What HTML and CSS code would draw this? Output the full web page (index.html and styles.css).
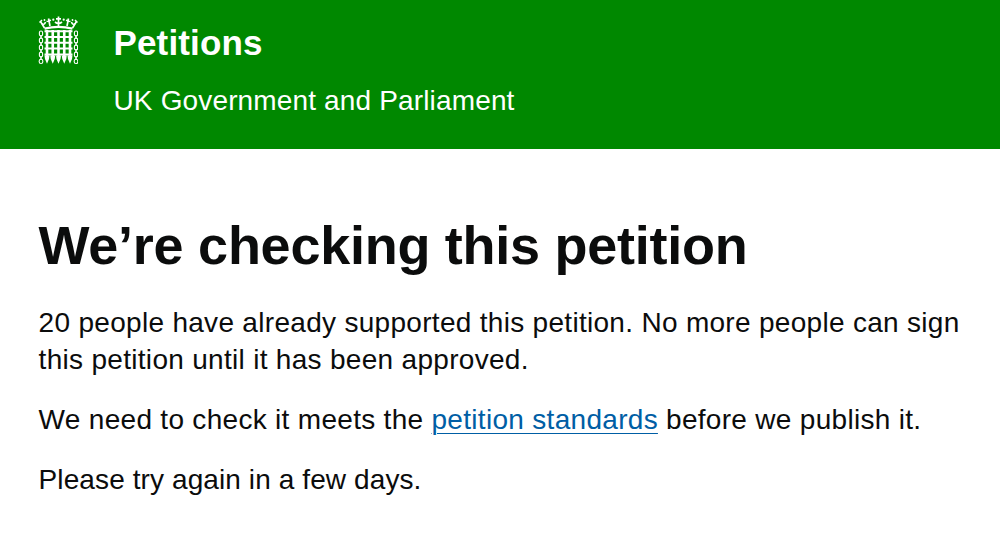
FILE: index.html
```html
<!DOCTYPE html>
<html lang="en">
<head>
<meta charset="utf-8">
<title>We’re checking this petition - Petitions</title>
<link rel="stylesheet" href="styles.css">
</head>
<body>
<header class="header">
  <svg class="portcullis" viewBox="38 15 40 50" aria-hidden="true">
    <g fill="none" stroke="#fff" stroke-width="2">
      <path d="M44.500 31.200H72.500M44.500 37H72.500M44.500 42.800H72.500M44.500 48.600H72.500M44.500 54.400H72.500"/>
      <path stroke-width="2.600" d="M47 30V57M52.750 30V57M58.500 30V57M64.250 30V57M70 30V57"/>
    </g>
    <path fill="#fff" d="M44.500 55.500H49.500L49 59L47 63.800L45 59ZM50.250 55.500H55.250L54.750 59L52.750 63.800L50.750 59ZM56 55.500H61L60.500 59L58.500 63.800L56.500 59ZM61.750 55.500H66.750L66.250 59L64.250 63.800L62.250 59ZM67.500 55.500H72.500L72 59L70 63.800L68 59Z"/>
    <g fill="none" stroke="#fff">
      <path d="M44.500 28.700Q58.500 25 72.500 28.700" stroke-width="2.400"/>
      <path d="M44.500 28L40.500 21.500M72.500 28L76.500 21.500" stroke-width="1.600"/>
      <path d="M39.500 22.500L42 20M42 23.500Q44.500 25.500 45.500 22M77.500 22.500L75 20M75 23.500Q72.500 25.500 71.500 22" stroke-width="1.500"/>
      <path d="M58.500 16.500V26M56 18.800H61M55 22Q58.500 25 62 22M48.500 18.500L50 26M46.500 21.500L51 20.200M68.500 18.500L67 26M70.500 21.500L66 20.200" stroke-width="1.700"/>
    </g>
    <g fill="#fff"><circle cx="53.300" cy="19.700" r="1.100"/><circle cx="63.700" cy="19.700" r="1.100"/><circle cx="44.500" cy="20" r=".9"/><circle cx="72.500" cy="20" r=".9"/></g>
    <g fill="none" stroke="#fff" stroke-width="1.100">
      <g id="chain"><rect x="39.400" y="31" width="3.200" height="5" rx="1.600"/><rect x="39.400" y="38" width="3.200" height="5" rx="1.600"/><rect x="39.400" y="45" width="3.200" height="5" rx="1.600"/><rect x="39.400" y="52" width="3.200" height="5" rx="1.600"/><rect x="39.200" y="59.300" width="3.600" height="4.200" rx="1.800"/><path d="M41 35V39M41 42V46M41 49V53M41 56V60" stroke-width="1.500"/></g>
      <use href="#chain" x="35"/>
    </g>
  </svg>
  <div class="brand">
    <a class="brand-name">Petitions</a>
    <span class="brand-sub">UK Government and Parliament</span>
  </div>
</header>
<main class="content">
  <h1 class="title">We’re checking this petition</h1>
  <p class="text">20 people have already supported this petition. No more people can sign<br>this petition until it has been approved.</p>
  <p class="text">We need to check it meets the <a class="link" href="#">petition standards</a> before we publish it.</p>
  <p class="text text-last">Please try again in a few days.</p>
</main>
</body>
</html>
```
FILE: styles.css
```css
body {
  margin: 0;
  background: #fff;
  color: #0b0c0c;
  font-family: "Liberation Sans", Arial, sans-serif;
}
.header {
  display: flex;
  box-sizing: border-box;
  height: 149px;
  padding: 15px 38px;
  background: #008800;
  color: #fff;
}
.portcullis { width: 40px; height: 50px; margin-right: 35.5px; }
.brand { display: flex; flex-direction: column; padding-top: 8px; }
.brand-name { font-size: 35px; line-height: 40px; font-weight: 700; letter-spacing: 0.15px; }
.brand-sub { margin-top: 22px; font-size: 28px; line-height: 32px; letter-spacing: 0.15px; }
.content { padding: 66px 38.6px 0; white-space: nowrap; }
.title { margin: 0; font-size: 54px; line-height: 60px; letter-spacing: -0.26px; }
.text { margin: 0 0 23px; font-size: 28px; line-height: 37px; letter-spacing: 0.3px; }
.text-last { letter-spacing: 0.1px; }
.title + .text { margin-top: 29px; }
.link { color: #005ea5; text-decoration: underline; text-decoration-thickness: 1px; text-underline-offset: 4px; }
```
